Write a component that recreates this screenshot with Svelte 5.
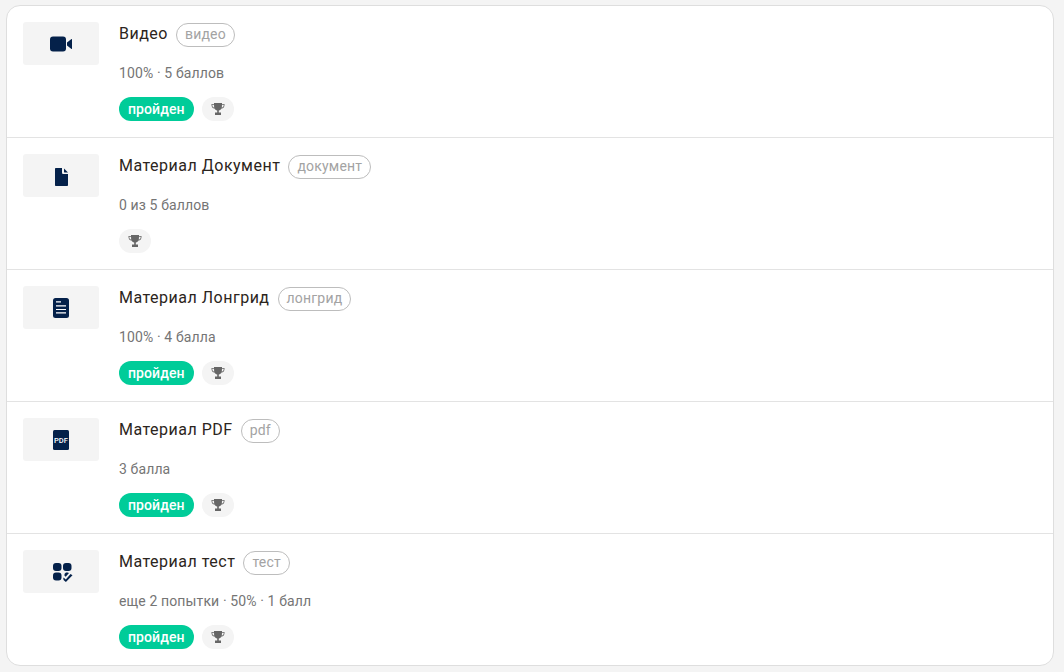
<script>
	const items = [
		{ title: 'Видео', tag: 'видео', meta: '100% · 5 баллов', passed: true, icon: 'video' },
		{ title: 'Материал Документ', tag: 'документ', meta: '0 из 5 баллов', passed: false, icon: 'doc' },
		{ title: 'Материал Лонгрид', tag: 'лонгрид', meta: '100% · 4 балла', passed: true, icon: 'longread' },
		{ title: 'Материал PDF', tag: 'pdf', meta: '3 балла', passed: true, icon: 'pdf' },
		{ title: 'Материал тест', tag: 'тест', meta: 'еще 2 попытки · 50% · 1 балл', passed: true, icon: 'test' }
	];
</script>

<div class="page">
	<ul class="list">
		{#each items as item}
			<li class="row">
				<div class="thumb">
					{#if item.icon === 'video'}
						<svg width="24" height="24" viewBox="0 0 24 24" fill="#04214a">
							<rect x="1" y="4.500" width="16" height="15" rx="3" />
							<path d="M18 10.500 22.500 7c.3-.2.500 0 .500.300v9.400c0 .3-.2.500-.5.300L18 13.500z" />
						</svg>
					{:else if item.icon === 'doc'}
						<svg width="24" height="24" viewBox="0 0 24 24" fill="#04214a">
							<path d="M6 5c0-.6.400-1 1-1h6v4.500c0 1 .7 1.500 1.500 1.500H19v11c0 .6-.5 1-1 1H7c-.6 0-1-.4-1-1z" />
							<path d="M15 4.500 19 8.500h-3.500c-.3 0-.5-.2-.5-.5z" />
						</svg>
					{:else if item.icon === 'longread'}
						<svg width="24" height="24" viewBox="0 0 24 24">
							<rect x="4" y="2" width="16" height="20" rx="2.500" fill="#04214a" />
							<path d="M7 5.800h5M7 9.800h10M7 13.500h10M7 16.800h10" stroke="#fff" stroke-width="1.200" />
						</svg>
					{:else if item.icon === 'pdf'}
						<svg width="24" height="24" viewBox="0 0 24 24">
							<rect x="4" y="2" width="16" height="20" rx="1.500" fill="#04214a" />
							<text x="12" y="14.500" class="pdf-label" text-anchor="middle">PDF</text>
						</svg>
					{:else}
						<svg width="24" height="24" viewBox="0 0 24 24" fill="#04214a">
							<rect x="4" y="3" width="8.500" height="8" rx="3" />
							<rect x="14" y="3" width="8.500" height="8" rx="3" />
							<rect x="4" y="12.500" width="8.500" height="8" rx="3" />
							<path d="M17 12.500h1.500a3 3 0 0 1 1.500.4l-3.300 3.800-1.300-1.100a3 3 0 0 1 1.600-3.100zM14.500 17.500l2.300 2 4.700-5.500 2 1.200-6.600 6.800-2.100-1.700A3 3 0 0 1 14.500 17.500z" />
						</svg>
					{/if}
				</div>
				<div class="body">
					<div class="head">
						<span class="title">{item.title}</span>
						<span class="tag">{item.tag}</span>
					</div>
					<div class="meta">{item.meta}</div>
					<div class="badges">
						{#if item.passed}
							<span class="passed">пройден</span>
						{/if}
						<span class="cup">
							<svg width="14" height="14" viewBox="0 0 14 14" fill="#666">
								<path d="M3 1h8v1h2.500v1c0 1.900-1 3.300-3 3.600C10 7.700 9 8.400 7.800 8.600V10.500H10V13H4v-2.500h2.200V8.600C5 8.400 4 7.700 3.500 6.600c-2-.3-3-1.700-3-3.600V2H3zM1.300 2.800V3c0 1.300.6 2.300 1.900 2.700L3 2.800zM12.700 2.800H11l-.2 2.900c1.300-.4 1.900-1.400 1.900-2.700z" fill-rule="evenodd" />
							</svg>
						</span>
					</div>
				</div>
			</li>
		{/each}
	</ul>
</div>

<style>
	:global(body) {
		background: #f4f4f4;
	}

	.page {
		padding: 5px 10px 6px 6px;
		font-family: Roboto, sans-serif;
	}

	.list {
		list-style: none;
		margin: 0;
		padding: 0;
		background: #fff;
		border: 1px solid #dedede;
		border-radius: 14px;
	}

	.row {
		display: flex;
		gap: 20px;
		height: 132px;
		box-sizing: border-box;
		padding: 16px 16px 0;
		border-bottom: 1px solid #e3e3e3;
	}

	.row:last-child {
		border-bottom: none;
		height: 131px;
	}

	.thumb {
		display: flex;
		align-items: center;
		justify-content: center;
		flex: none;
		width: 76px;
		height: 43px;
		background: #f4f4f4;
		border-radius: 3px;
	}

	.pdf-label {
		font-family: Roboto, sans-serif;
		font-size: 7.500px;
		font-weight: 500;
		fill: #fff;
	}

	.head {
		display: flex;
		align-items: center;
		gap: 8px;
		height: 24px;
		margin-top: 1px;
	}

	.title {
		font-size: 16px;
		line-height: 22px;
		margin-top: -2px;
		letter-spacing: 0.5px;
		color: #2c2520;
	}

	.tag {
		box-sizing: border-box;
		height: 24px;
		padding: 0 8px;
		border: 1px solid #bdbdbd;
		border-radius: 12px;
		font-size: 14px;
		line-height: 20px;
		letter-spacing: 0.2px;
		color: #a3a3a3;
	}

	.meta {
		margin-top: 17px;
		font-size: 14px;
		line-height: 18px;
		letter-spacing: 0.12px;
		color: #757575;
	}

	.badges {
		display: flex;
		gap: 8px;
		margin-top: 15px;
	}

	.passed {
		height: 24px;
		padding: 0 9px;
		border-radius: 12px;
		background: #00cc99;
		color: #fff;
		font-size: 14px;
		font-weight: 500;
		line-height: 24px;
		letter-spacing: 0.1px;
	}

	.cup {
		display: flex;
		align-items: center;
		justify-content: center;
		width: 32px;
		height: 24px;
		border-radius: 12px;
		background: #f4f4f4;
	}
</style>
